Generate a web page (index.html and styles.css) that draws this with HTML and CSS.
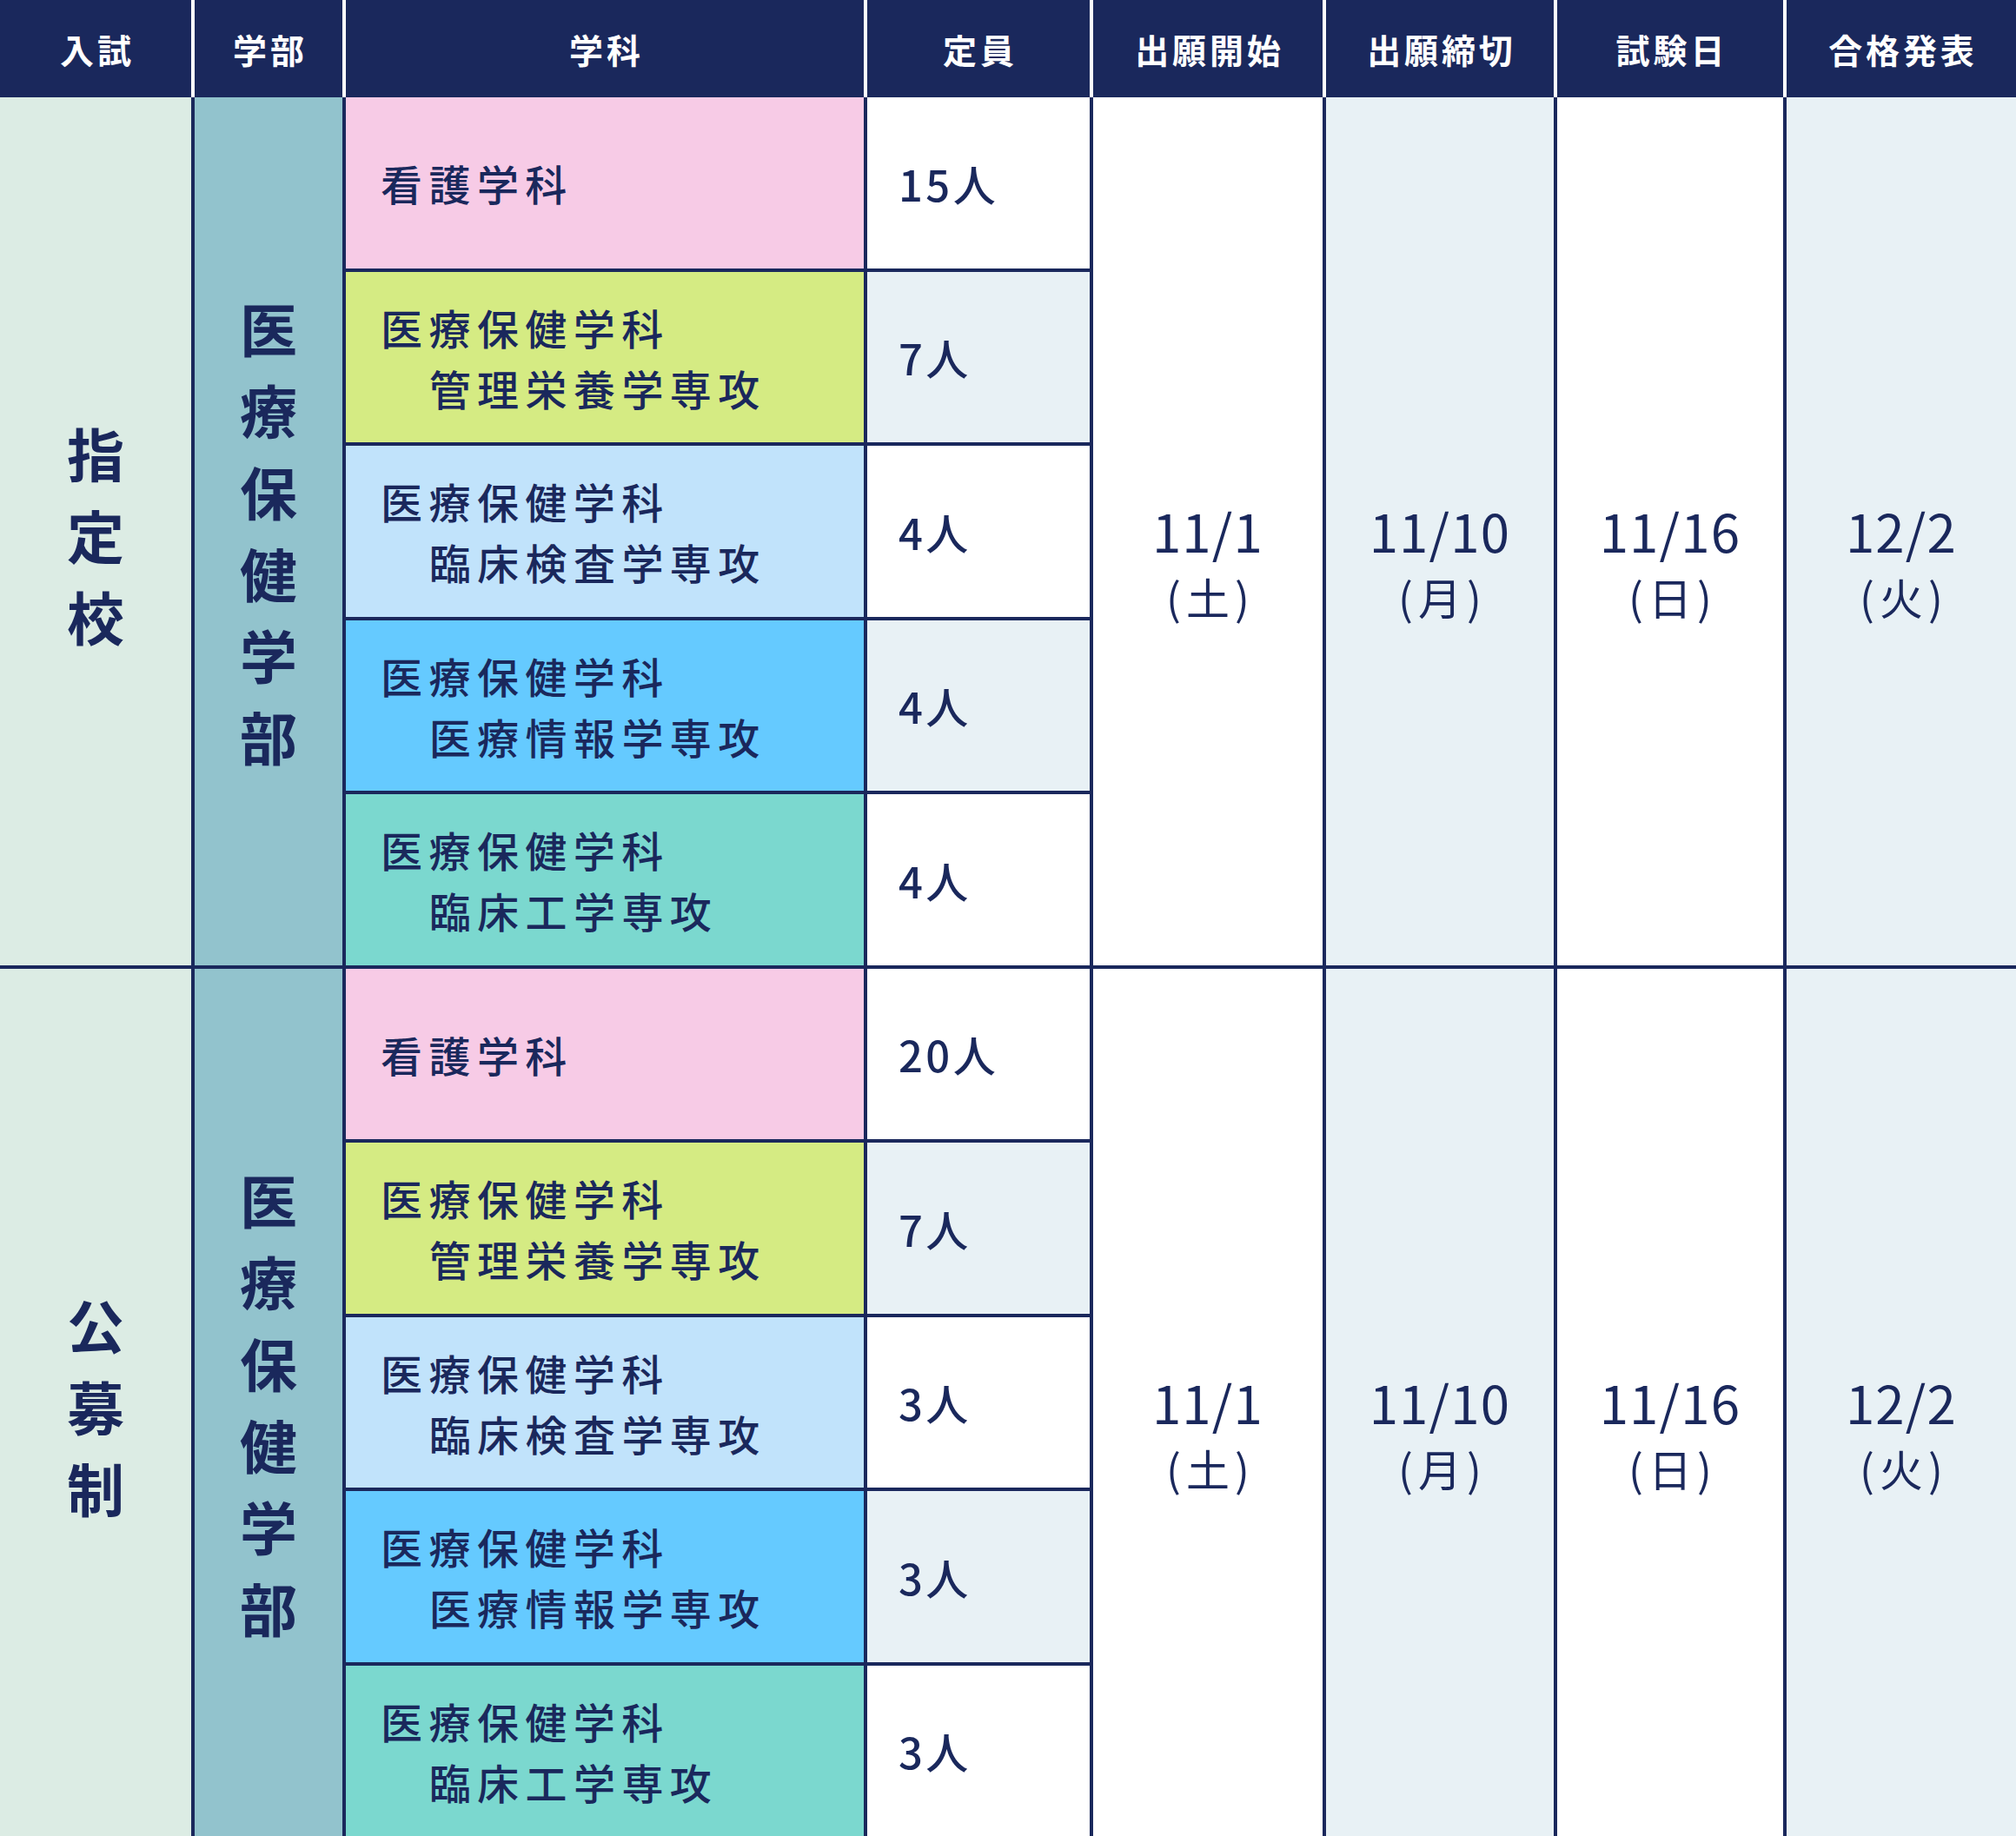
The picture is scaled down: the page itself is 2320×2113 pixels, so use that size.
FILE: index.html
```html
<!DOCTYPE html>
<html lang="ja">
<head>
<meta charset="utf-8">
<title>入試日程</title>
<link rel="stylesheet" href="styles.css">
</head>
<body>
<div class="table">
  <div class="head">
    <div class="th">入試</div>
    <div class="th">学部</div>
    <div class="th">学科</div>
    <div class="th">定員</div>
    <div class="th">出願開始</div>
    <div class="th">出願締切</div>
    <div class="th">試験日</div>
    <div class="th">合格発表</div>
  </div>
  <div class="body">
    <!-- 指定校 -->
    <div class="cell span5 exam"><span class="vert">指<br>定<br>校</span></div>
    <div class="cell span5 faculty"><span class="vert">医<br>療<br>保<br>健<br>学<br>部</span></div>
    <div class="cell dept pink"><p>看護学科</p></div>
    <div class="cell cap white">15人</div>
    <div class="cell span5 date white"><span class="d">11/1</span><span class="w">(土)</span></div>
    <div class="cell span5 date light"><span class="d">11/10</span><span class="w">(月)</span></div>
    <div class="cell span5 date white"><span class="d">11/16</span><span class="w">(日)</span></div>
    <div class="cell span5 date light"><span class="d">12/2</span><span class="w">(火)</span></div>
    <div class="cell dept lime"><p>医療保健学科<br><span class="sub">管理栄養学専攻</span></p></div>
    <div class="cell cap light">7人</div>
    <div class="cell dept pale"><p>医療保健学科<br><span class="sub">臨床検査学専攻</span></p></div>
    <div class="cell cap white">4人</div>
    <div class="cell dept sky"><p>医療保健学科<br><span class="sub">医療情報学専攻</span></p></div>
    <div class="cell cap light">4人</div>
    <div class="cell dept teal"><p>医療保健学科<br><span class="sub">臨床工学専攻</span></p></div>
    <div class="cell cap white">4人</div>

    <!-- 公募制 -->
    <div class="cell span5 exam"><span class="vert">公<br>募<br>制</span></div>
    <div class="cell span5 faculty"><span class="vert">医<br>療<br>保<br>健<br>学<br>部</span></div>
    <div class="cell dept pink"><p>看護学科</p></div>
    <div class="cell cap white">20人</div>
    <div class="cell span5 date white"><span class="d">11/1</span><span class="w">(土)</span></div>
    <div class="cell span5 date light"><span class="d">11/10</span><span class="w">(月)</span></div>
    <div class="cell span5 date white"><span class="d">11/16</span><span class="w">(日)</span></div>
    <div class="cell span5 date light"><span class="d">12/2</span><span class="w">(火)</span></div>
    <div class="cell dept lime"><p>医療保健学科<br><span class="sub">管理栄養学専攻</span></p></div>
    <div class="cell cap light">7人</div>
    <div class="cell dept pale"><p>医療保健学科<br><span class="sub">臨床検査学専攻</span></p></div>
    <div class="cell cap white">3人</div>
    <div class="cell dept sky"><p>医療保健学科<br><span class="sub">医療情報学専攻</span></p></div>
    <div class="cell cap light">3人</div>
    <div class="cell dept teal"><p>医療保健学科<br><span class="sub">臨床工学専攻</span></p></div>
    <div class="cell cap white">3人</div>
  </div>
</div>
</body>
</html>
```

FILE: styles.css
```css
* { box-sizing: border-box; }

html, body {
  margin: 0;
  padding: 0;
  background: #ffffff;
}

body {
  font-family: "Noto Sans CJK JP", "Noto Sans", sans-serif;
  color: #1a285c;
  width: 2320px;
}

.table {
  width: 2320px;
}

.head,
.body {
  display: grid;
  grid-template-columns: 220px 170px 596px 256px 264px 262px 260px 264px;
  column-gap: 4px;
}

.head {
  height: 112px;
  background: #ffffff;
}

.th {
  background: #1a285c;
  color: #ffffff;
  font-weight: 700;
  font-size: 39px;
  letter-spacing: 0.1em;
  padding-left: 0.1em;
  display: flex;
  align-items: center;
  justify-content: center;
  line-height: 1;
}

.body {
  height: 2001px;
  grid-template-rows: repeat(10, 1fr);
  row-gap: 4px;
  background: #1a285c;
}

.cell {
  display: flex;
  align-items: center;
  min-width: 0;
  min-height: 0;
}

.span5 { grid-row: span 5; }

.exam {
  background: #dcece4;
  justify-content: center;
}

.faculty {
  background: #92c3cd;
  justify-content: center;
}

.vert {
  font-weight: 700;
  font-size: 66px;
  line-height: 94px;
  text-align: center;
}

.exam .vert { padding-top: 6px; }

.dept {
  padding-left: 40px;
}

.dept p {
  margin: 0;
  font-size: 48px;
  font-weight: 500;
  letter-spacing: 0.155em;
  line-height: 70px;
}

.sub {
  padding-left: 1.16em;
}

.pink { background: #f7cbe6; }
.lime { background: #d5eb83; }
.pale { background: #c1e3fb; }
.sky  { background: #65caff; }
.teal { background: #7bd8cf; }
.white { background: #ffffff; }
.light { background: #e8f1f5; }

.cap {
  padding-left: 36px;
  font-size: 49px;
  font-weight: 500;
  letter-spacing: 0.07em;
}

.date {
  flex-direction: column;
  justify-content: center;
  padding-top: 78px;
  font-weight: 400;
}

.date .d {
  font-size: 60px;
  line-height: 72px;
  letter-spacing: 0.02em;
}

.date .w {
  font-size: 50px;
  line-height: 80px;
  letter-spacing: 0.12em;
  padding-left: 0.12em;
}
```
